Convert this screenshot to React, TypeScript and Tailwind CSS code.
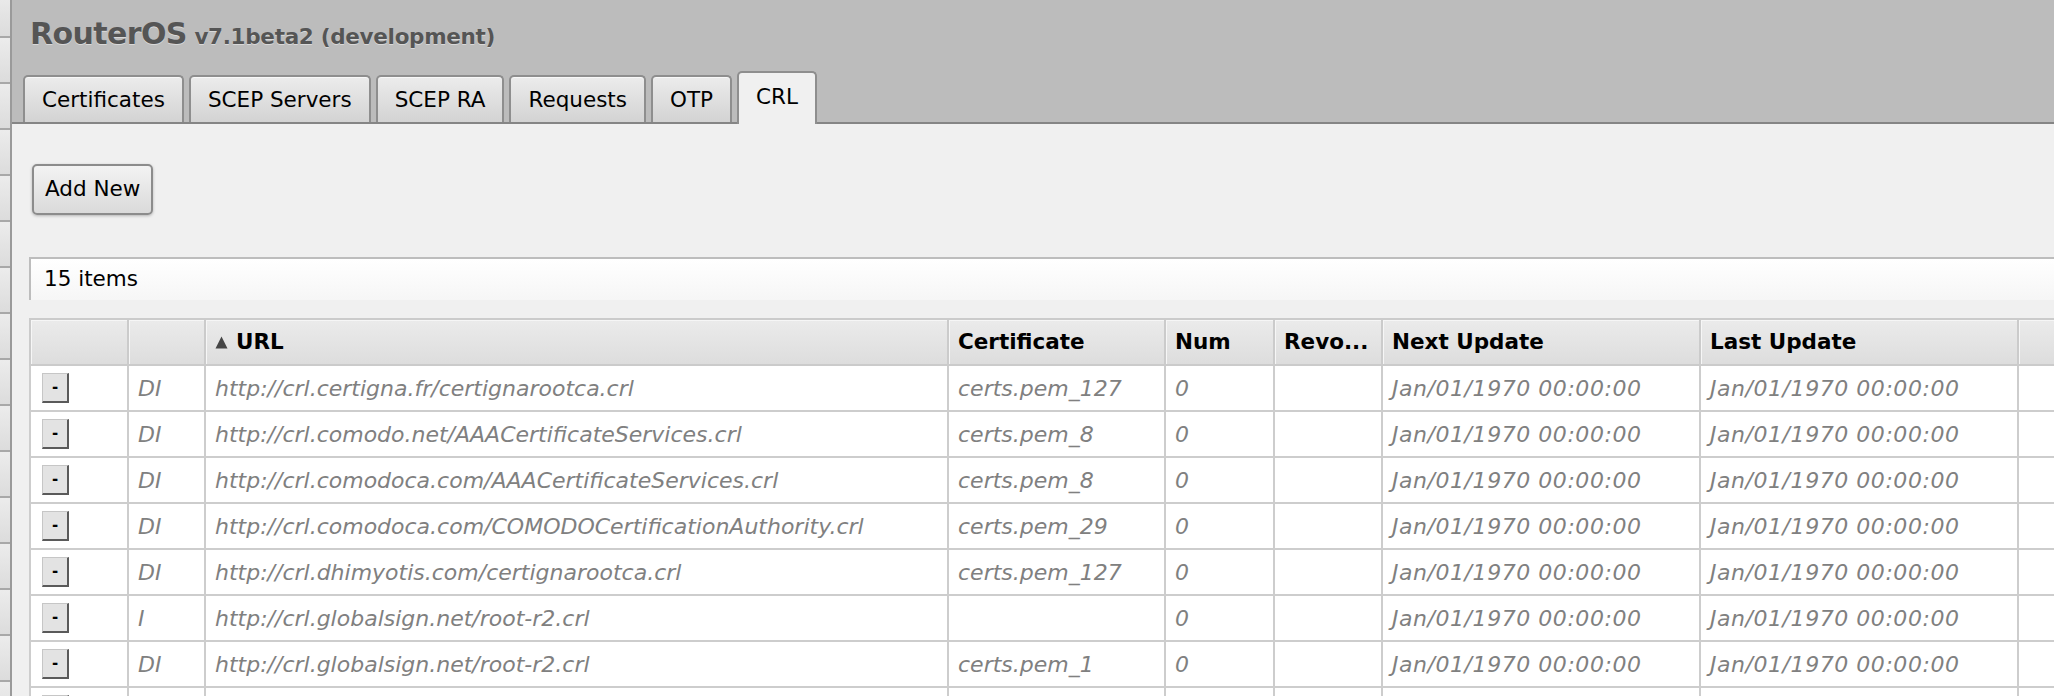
import React from "react";

type CrlRow = {
  flags: string;
  url: string;
  certificate: string;
  num: string;
  revoked: string;
  nextUpdate: string;
  lastUpdate: string;
};

const EPOCH = "Jan/01/1970 00:00:00";

const ROWS: CrlRow[] = [
  { flags: "DI", url: "http://crl.certigna.fr/certignarootca.crl", certificate: "certs.pem_127", num: "0", revoked: "", nextUpdate: EPOCH, lastUpdate: EPOCH },
  { flags: "DI", url: "http://crl.comodo.net/AAACertificateServices.crl", certificate: "certs.pem_8", num: "0", revoked: "", nextUpdate: EPOCH, lastUpdate: EPOCH },
  { flags: "DI", url: "http://crl.comodoca.com/AAACertificateServices.crl", certificate: "certs.pem_8", num: "0", revoked: "", nextUpdate: EPOCH, lastUpdate: EPOCH },
  { flags: "DI", url: "http://crl.comodoca.com/COMODOCertificationAuthority.crl", certificate: "certs.pem_29", num: "0", revoked: "", nextUpdate: EPOCH, lastUpdate: EPOCH },
  { flags: "DI", url: "http://crl.dhimyotis.com/certignarootca.crl", certificate: "certs.pem_127", num: "0", revoked: "", nextUpdate: EPOCH, lastUpdate: EPOCH },
  { flags: "I", url: "http://crl.globalsign.net/root-r2.crl", certificate: "", num: "0", revoked: "", nextUpdate: EPOCH, lastUpdate: EPOCH },
  { flags: "DI", url: "http://crl.globalsign.net/root-r2.crl", certificate: "certs.pem_1", num: "0", revoked: "", nextUpdate: EPOCH, lastUpdate: EPOCH },
  { flags: "DI", url: "http://crl.identrust.com/DSTROOTCAX3CRL.crl", certificate: "certs.pem_3", num: "0", revoked: "", nextUpdate: EPOCH, lastUpdate: EPOCH },
  { flags: "DI", url: "http://crl.securetrust.com/STCA.crl", certificate: "certs.pem_51", num: "0", revoked: "", nextUpdate: EPOCH, lastUpdate: EPOCH },
  { flags: "DI", url: "http://crl.usertrust.com/AAACertificateServices.crl", certificate: "certs.pem_8", num: "0", revoked: "", nextUpdate: EPOCH, lastUpdate: EPOCH },
  { flags: "DI", url: "http://crl3.digicert.com/DigiCertGlobalRootCA.crl", certificate: "certs.pem_40", num: "0", revoked: "", nextUpdate: EPOCH, lastUpdate: EPOCH },
  { flags: "DI", url: "http://crl4.digicert.com/DigiCertGlobalRootCA.crl", certificate: "certs.pem_40", num: "0", revoked: "", nextUpdate: EPOCH, lastUpdate: EPOCH },
  { flags: "DI", url: "http://www.certicamara.com/certicamaraca.crl", certificate: "certs.pem_22", num: "0", revoked: "", nextUpdate: EPOCH, lastUpdate: EPOCH },
  { flags: "DI", url: "http://www.e-szigno.hu/RootCA2009.crl", certificate: "certs.pem_66", num: "0", revoked: "", nextUpdate: EPOCH, lastUpdate: EPOCH },
  { flags: "DI", url: "https://crl.certigna.fr/certignarootca.crl", certificate: "certs.pem_127", num: "0", revoked: "", nextUpdate: EPOCH, lastUpdate: EPOCH },
];

const TABS = ["Certificates", "SCEP Servers", "SCEP RA", "Requests", "OTP", "CRL"];

const COLS = [98, 77, 743, 217, 109, 108, 318, 318, 112];

const th =
  "h-[46px] border-2 border-[#cbcbcb] bg-linear-to-b from-[#ebebeb] to-[#dddddd] px-[9px] text-left text-[21.5px] font-bold text-black shadow-[inset_1px_1px_0_#f6f6f6] whitespace-nowrap overflow-hidden";
const td =
  "h-[46px] border-2 border-[#cdcdcd] px-[9px] text-[22px] italic text-[#808080] whitespace-nowrap overflow-hidden";
const tdDate = td + " tracking-[0.55px]";

export default function App() {
  return (
    <div className="flex h-[696px] w-[2054px] overflow-hidden bg-[#f0f0f0] font-['DejaVu_Sans',Verdana,sans-serif] text-[21.5px]">
      {/* left menu sliver */}
      <div className="w-[12px] shrink-0 overflow-hidden border-r-2 border-[#9a9a9a] bg-[#e2e2e2]">
        <div className="-mt-[8px]">
          {[...Array(16)].map((_, i) => (
            <div key={i} className="h-[46px] border-b-2 border-[#a8a8a8] bg-linear-to-b from-[#ececec] to-[#dcdcdc]" />
          ))}
        </div>
      </div>

      <div className="flex min-w-0 flex-1 flex-col">
        <header className="flex h-[124px] shrink-0 flex-col justify-between bg-[#bcbcbc]">
          <h1 className="pl-[18px] pt-[19px] font-bold leading-none text-[#555555] [text-shadow:0_1px_0_rgba(255,255,255,0.45)]">
            <span className="text-[30px] tracking-[-0.6px]">RouterOS</span>{" "}
            <span className="text-[21.5px] tracking-[-0.3px]">v7.1beta2 (development)</span>
          </h1>

          <div className="flex items-end gap-[5px] border-b-2 border-[#858585] pl-[11px]">
            {TABS.map(t =>
              t === "CRL" ? (
                <div
                  key={t}
                  className="relative -mb-[2px] flex h-[53px] items-center rounded-t-[5px] border-2 border-b-0 border-[#8e8e8e] bg-[#f0f0f0] px-[17px] pb-[2px] text-black"
                >
                  {t}
                </div>
              ) : (
                <div
                  key={t}
                  className="flex h-[47px] items-center rounded-t-[5px] border-2 border-b-0 border-[#8e8e8e] bg-linear-to-b from-[#ececec] to-[#d3d3d3] px-[17px] pt-[1px] text-black shadow-[inset_0_1px_0_#f8f8f8]"
                >
                  {t}
                </div>
              )
            )}
          </div>
        </header>

        <main className="w-[2100px] flex-1 pl-[17px] pt-[40px]">
          <button className="ml-[3px] flex h-[51px] items-center rounded-[5px] border-2 border-[#8c8c8c] bg-linear-to-b from-[#f3f3f3] to-[#dadada] px-[11px] text-black shadow-[0_1px_3px_rgba(0,0,0,0.25)]">
            Add New
          </button>

          <div className="mt-[42px] flex h-[43px] items-center border-l-2 border-t-2 border-[#bdbdbd] bg-linear-to-b from-[#ffffff] to-[#f6f6f6] pl-[13px] text-black">
            15 items
          </div>

          <table className="mt-[18px] table-fixed border-collapse bg-white" style={{ width: COLS.reduce((a, b) => a + b, 0) }}>
            <colgroup>
              {COLS.map((w, i) => (
                <col key={i} style={{ width: w }} />
              ))}
            </colgroup>
            <thead>
              <tr>
                <th className={th}></th>
                <th className={th}></th>
                <th className={th}>
                  <span className="flex items-center gap-[8px]">
                    <svg width="13" height="13" viewBox="0 0 13 13">
                      <path d="M6.5 0.5 L12.5 12.5 L0.5 12.5 Z" fill="#454545" />
                    </svg>
                    URL
                  </span>
                </th>
                <th className={th}>Certificate</th>
                <th className={th}>Num</th>
                <th className={th}>Revo...</th>
                <th className={th}>Next Update</th>
                <th className={th}>Last Update</th>
                <th className={th}></th>
              </tr>
            </thead>
            <tbody>
              {ROWS.map((r, i) => (
                <tr key={i}>
                  <td className="h-[46px] border-2 border-[#cdcdcd] pl-[11px]">
                    <div className="flex h-[30px] w-[27px] items-center justify-center border border-b-2 border-r-2 border-[#c6c6c6] border-b-[#5a5a5a] border-r-[#5a5a5a] bg-[#e3e3e3] text-[15px] font-bold not-italic leading-none text-black">
                      -
                    </div>
                  </td>
                  <td className={td}>{r.flags}</td>
                  <td className={td}>{r.url}</td>
                  <td className={td}>{r.certificate}</td>
                  <td className={td}>{r.num}</td>
                  <td className={td}>{r.revoked}</td>
                  <td className={tdDate}>{r.nextUpdate}</td>
                  <td className={tdDate}>{r.lastUpdate}</td>
                  <td className={td}></td>
                </tr>
              ))}
            </tbody>
          </table>
        </main>
      </div>
    </div>
  );
}
